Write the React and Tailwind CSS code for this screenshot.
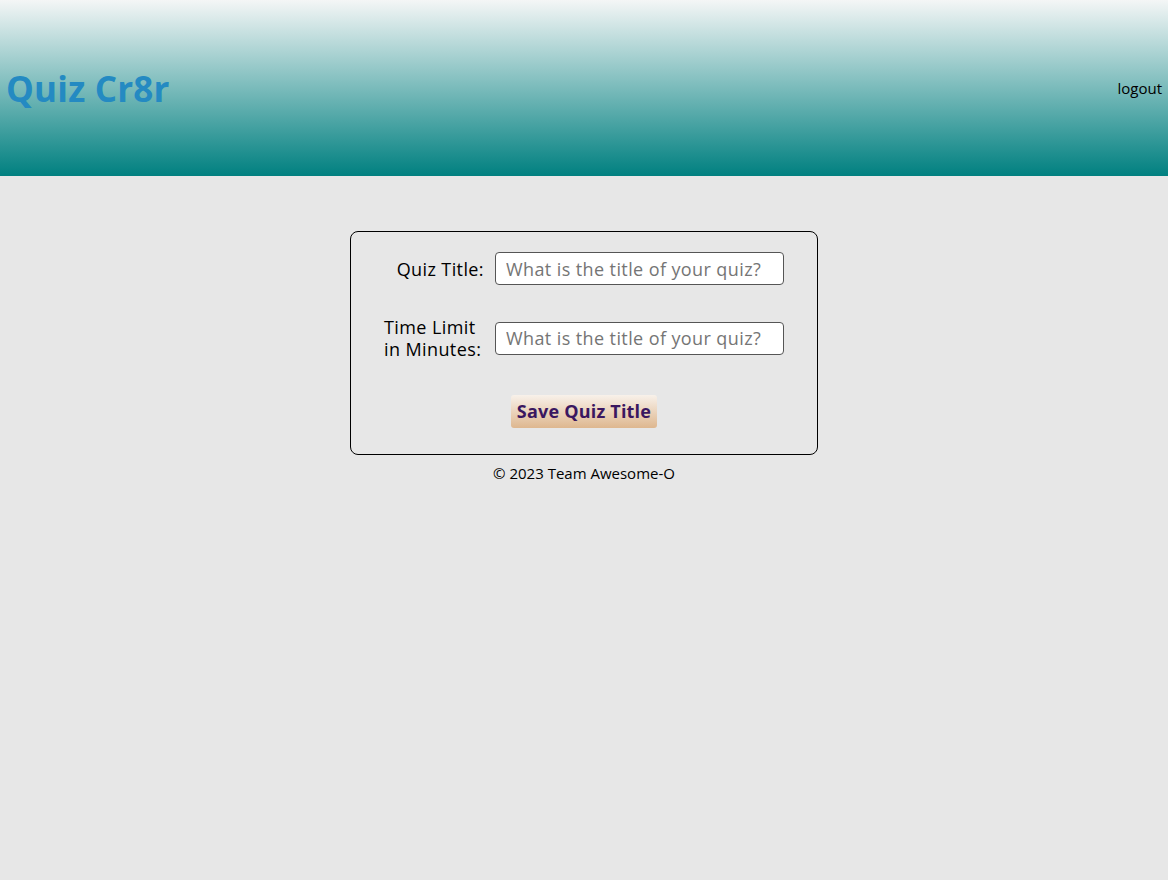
export default function App() {
  return (
    <div className="min-h-[880px] bg-[#e7e7e7] text-black" style={{ fontFamily: '"Open Sans", "Noto Sans", sans-serif' }}>
      <header className="h-[176px] flex items-center justify-between px-[6px] bg-linear-to-b/srgb from-[#f4f6f6] to-[#008080]">
        <h1 className="text-[35px] font-bold text-[#248ac2] leading-none tracking-[0.2px]">Quiz Cr8r</h1>
        <a className="text-[15px] text-black">logout</a>
      </header>
      <main className="flex flex-col items-center pt-[55px]">
        <div className="w-[468px] border border-black rounded-[8px] px-[33px] pt-[20px] pb-[26px] flex flex-col items-center">
          <div className="grid grid-cols-[100px_289px] gap-x-[11px] gap-y-[31px] items-center text-[18px] leading-[22px] tracking-[0.4px]">
            <label className="text-right">Quiz Title:</label>
            <input className="w-[289px] h-[33px] bg-white border border-[#555] rounded-[4px] px-[10px] text-[18px] tracking-[0.4px] placeholder:text-[#757575] outline-none" placeholder="What is the title of your quiz?" />
            <label className="text-left">Time Limit<br />in Minutes:</label>
            <input className="w-[289px] h-[33px] bg-white border border-[#555] rounded-[4px] px-[10px] text-[18px] tracking-[0.4px] placeholder:text-[#757575] outline-none" placeholder="What is the title of your quiz?" />
          </div>
          <button className="mt-[35px] w-[146px] h-[33px] rounded-[3px] bg-linear-to-b/srgb from-[#f8f1ea] to-[#deb78f] text-[#3a1760] font-bold text-[18px] tracking-[0.2px]">Save Quiz Title</button>
        </div>
        <footer className="mt-[7px] text-[15px]">© 2023 Team Awesome-O</footer>
      </main>
    </div>
  );
}
